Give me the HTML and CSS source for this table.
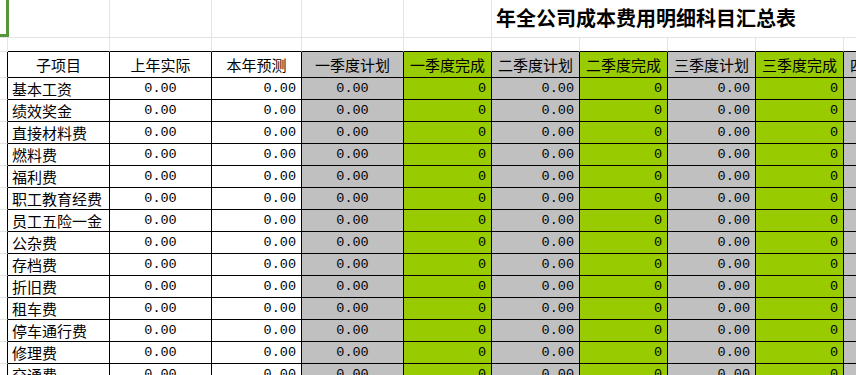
FILE: index.html
```html
<!DOCTYPE html>
<html lang="zh">
<head>
<meta charset="utf-8">
<title>年全公司成本费用明细科目汇总表</title>
<link rel="stylesheet" href="styles.css">
</head>
<body>
<div class="sheet">
  <!-- row 1 -->
  <div class="c0 top"><div class="selection"></div></div>
  <div class="cell pre"></div>
  <div class="cell pre"></div>
  <div class="cell pre"></div>
  <div class="cell pre"></div>
  <div class="cell pre"></div>
  <div class="cell pre title">年全公司成本费用明细科目汇总表</div>
  <!-- row 2 -->
  <div class="c0 top"></div>
  <div class="cell pre2"></div>
  <div class="cell pre2"></div>
  <div class="cell pre2"></div>
  <div class="cell pre2"></div>
  <div class="cell pre2"></div>
  <div class="cell pre2"></div>
  <div class="cell pre2"></div>
  <div class="cell pre2"></div>
  <div class="cell pre2"></div>
  <div class="cell pre2"></div>
  <!-- header -->
  <div class="c0"></div>
  <div class="cell head">子项目</div>
  <div class="cell head">上年实际</div>
  <div class="cell head">本年预测</div>
  <div class="cell head gray">一季度计划</div>
  <div class="cell head green">一季度完成</div>
  <div class="cell head gray">二季度计划</div>
  <div class="cell head green">二季度完成</div>
  <div class="cell head gray">三季度计划</div>
  <div class="cell head green">三季度完成</div>
  <div class="cell head gray">四季度计划</div>

  <div class="c0"></div><div class="cell lbl">基本工资</div><div class="cell num ctr">0.00</div><div class="cell num rt">0.00</div><div class="cell num ctr gray">0.00</div><div class="cell num rt green">0</div><div class="cell num rt gray">0.00</div><div class="cell num rt green">0</div><div class="cell num rt gray">0.00</div><div class="cell num rt green">0</div><div class="cell gray"></div>
  <div class="c0"></div><div class="cell lbl">绩效奖金</div><div class="cell num ctr">0.00</div><div class="cell num rt">0.00</div><div class="cell num ctr gray">0.00</div><div class="cell num rt green">0</div><div class="cell num rt gray">0.00</div><div class="cell num rt green">0</div><div class="cell num rt gray">0.00</div><div class="cell num rt green">0</div><div class="cell gray"></div>
  <div class="c0"></div><div class="cell lbl">直接材料费</div><div class="cell num ctr">0.00</div><div class="cell num rt">0.00</div><div class="cell num ctr gray">0.00</div><div class="cell num rt green">0</div><div class="cell num rt gray">0.00</div><div class="cell num rt green">0</div><div class="cell num rt gray">0.00</div><div class="cell num rt green">0</div><div class="cell gray"></div>
  <div class="c0"></div><div class="cell lbl">燃料费</div><div class="cell num ctr">0.00</div><div class="cell num rt">0.00</div><div class="cell num ctr gray">0.00</div><div class="cell num rt green">0</div><div class="cell num rt gray">0.00</div><div class="cell num rt green">0</div><div class="cell num rt gray">0.00</div><div class="cell num rt green">0</div><div class="cell gray"></div>
  <div class="c0"></div><div class="cell lbl">福利费</div><div class="cell num ctr">0.00</div><div class="cell num rt">0.00</div><div class="cell num ctr gray">0.00</div><div class="cell num rt green">0</div><div class="cell num rt gray">0.00</div><div class="cell num rt green">0</div><div class="cell num rt gray">0.00</div><div class="cell num rt green">0</div><div class="cell gray"></div>
  <div class="c0"></div><div class="cell lbl">职工教育经费</div><div class="cell num ctr">0.00</div><div class="cell num rt">0.00</div><div class="cell num ctr gray">0.00</div><div class="cell num rt green">0</div><div class="cell num rt gray">0.00</div><div class="cell num rt green">0</div><div class="cell num rt gray">0.00</div><div class="cell num rt green">0</div><div class="cell gray"></div>
  <div class="c0"></div><div class="cell lbl">员工五险一金</div><div class="cell num ctr">0.00</div><div class="cell num rt">0.00</div><div class="cell num ctr gray">0.00</div><div class="cell num rt green">0</div><div class="cell num rt gray">0.00</div><div class="cell num rt green">0</div><div class="cell num rt gray">0.00</div><div class="cell num rt green">0</div><div class="cell gray"></div>
  <div class="c0"></div><div class="cell lbl">公杂费</div><div class="cell num ctr">0.00</div><div class="cell num rt">0.00</div><div class="cell num ctr gray">0.00</div><div class="cell num rt green">0</div><div class="cell num rt gray">0.00</div><div class="cell num rt green">0</div><div class="cell num rt gray">0.00</div><div class="cell num rt green">0</div><div class="cell gray"></div>
  <div class="c0"></div><div class="cell lbl">存档费</div><div class="cell num ctr">0.00</div><div class="cell num rt">0.00</div><div class="cell num ctr gray">0.00</div><div class="cell num rt green">0</div><div class="cell num rt gray">0.00</div><div class="cell num rt green">0</div><div class="cell num rt gray">0.00</div><div class="cell num rt green">0</div><div class="cell gray"></div>
  <div class="c0"></div><div class="cell lbl">折旧费</div><div class="cell num ctr">0.00</div><div class="cell num rt">0.00</div><div class="cell num ctr gray">0.00</div><div class="cell num rt green">0</div><div class="cell num rt gray">0.00</div><div class="cell num rt green">0</div><div class="cell num rt gray">0.00</div><div class="cell num rt green">0</div><div class="cell gray"></div>
  <div class="c0"></div><div class="cell lbl">租车费</div><div class="cell num ctr">0.00</div><div class="cell num rt">0.00</div><div class="cell num ctr gray">0.00</div><div class="cell num rt green">0</div><div class="cell num rt gray">0.00</div><div class="cell num rt green">0</div><div class="cell num rt gray">0.00</div><div class="cell num rt green">0</div><div class="cell gray"></div>
  <div class="c0"></div><div class="cell lbl">停车通行费</div><div class="cell num ctr">0.00</div><div class="cell num rt">0.00</div><div class="cell num ctr gray">0.00</div><div class="cell num rt green">0</div><div class="cell num rt gray">0.00</div><div class="cell num rt green">0</div><div class="cell num rt gray">0.00</div><div class="cell num rt green">0</div><div class="cell gray"></div>
  <div class="c0"></div><div class="cell lbl">修理费</div><div class="cell num ctr">0.00</div><div class="cell num rt">0.00</div><div class="cell num ctr gray">0.00</div><div class="cell num rt green">0</div><div class="cell num rt gray">0.00</div><div class="cell num rt green">0</div><div class="cell num rt gray">0.00</div><div class="cell num rt green">0</div><div class="cell gray"></div>
  <div class="c0"></div><div class="cell lbl">交通费</div><div class="cell num ctr">0.00</div><div class="cell num rt">0.00</div><div class="cell num ctr gray">0.00</div><div class="cell num rt green">0</div><div class="cell num rt gray">0.00</div><div class="cell num rt green">0</div><div class="cell num rt gray">0.00</div><div class="cell num rt green">0</div><div class="cell gray"></div>
</div>
</body>
</html>
```
FILE: styles.css
```css
html, body {
  margin: 0;
  padding: 0;
  background: #ffffff;
  overflow: hidden;
}
body {
  width: 856px;
  height: 375px;
  font-family: "Noto Sans CJK SC", "Noto Sans", sans-serif;
  color: #000000;
}
.sheet {
  display: grid;
  width: max-content;
  grid-template-columns: 8px 102px 102px 90px 102px 88px 88px 88px 88px 88px 88px;
  grid-template-rows: 38px 14px 26px repeat(14, 22px);
}
.c0 {
  position: relative;
  box-sizing: border-box;
  border-right: 1px solid #000000;
  border-bottom: 1px solid #e3e3e3;
}
.c0.top {
  border-right-color: #e3e3e3;
}
.selection {
  position: absolute;
  left: -10px;
  top: -10px;
  width: 19px;
  height: 47px;
  box-sizing: border-box;
  border: 3px solid #55963a;
}
.cell {
  box-sizing: border-box;
  border-right: 1px solid #000000;
  border-bottom: 1px solid #000000;
  display: flex;
  align-items: center;
  white-space: nowrap;
  overflow: hidden;
  font-size: 15px;
  line-height: 1;
}
.pre {
  border-right-color: #e3e3e3;
  border-bottom-color: #e3e3e3;
}
.pre2 {
  border-right-color: #e3e3e3;
}
.title {
  grid-column: 7 / span 5;
  border-right: none;
  font-size: 20px;
  font-weight: bold;
  padding-left: 4px;
  padding-bottom: 2px;
  overflow: visible;
}
.head {
  justify-content: center;
}
.lbl {
  padding-left: 4px;
}
.num {
  font-family: "Liberation Mono", "DejaVu Sans Mono", monospace;
  font-size: 13.5px;
  padding-top: 1px;
}
.ctr {
  justify-content: center;
}
.rt {
  justify-content: flex-end;
  padding-right: 5px;
}
.gray {
  background: #c0c0c0;
}
.green {
  background: #99cc00;
}
```
